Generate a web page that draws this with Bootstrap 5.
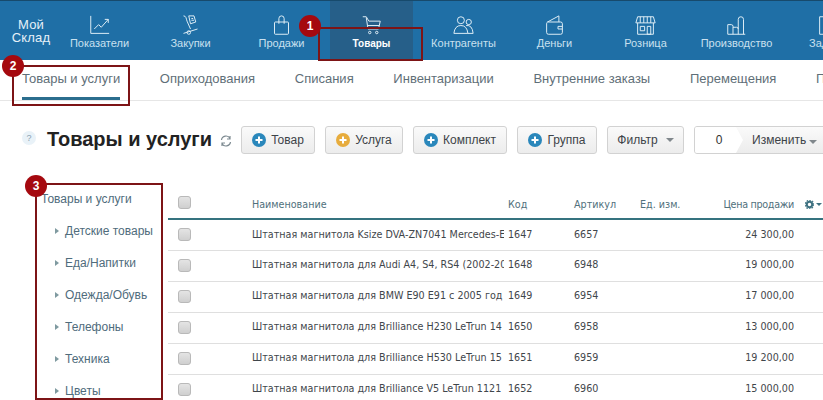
<!DOCTYPE html>
<html lang="ru"><head><meta charset="utf-8"><title>Товары и услуги</title>
<link href="https://cdn.jsdelivr.net/npm/bootstrap@5.3.0/dist/css/bootstrap.min.css" rel="stylesheet">
<style>
html,body{margin:0;height:400px;overflow:hidden;background:#fff}
body{font-family:"Liberation Sans",Arial,sans-serif;width:823px;position:relative}
.topbar{height:60px;background:#1f6fa6;border-top:1px solid #174a6c;padding-left:54px;white-space:nowrap;position:relative}
.brand{position:absolute;left:10px;top:17px;width:42px;text-align:center;color:#e6f1f8;font-size:13px;line-height:13px;font-weight:400;letter-spacing:.2px}
.tb-item{flex:0 0 91px;width:91px;height:59px;text-align:center;color:#c9e0ef;font-size:11px;line-height:13px;padding-top:14px}
.tb-item svg{display:block;margin:0 auto 0;width:21px;height:21px;fill:none;stroke:#e3f0f8;stroke-width:1.1}
.tb-item span{display:block;margin-top:1px}
.tb-item.on{background:#265f89;color:#fff;font-weight:700;font-size:10px;flex:0 0 83px;width:83px;margin:0 5px 0 3px}
.subbar{height:41px;border-bottom:1px solid #e6e6e6;padding-left:22px;gap:39.7px;font-size:13px;color:#5f6f78;white-space:nowrap}
.subbar div{height:40px;padding-top:10px;line-height:17px;flex:0 0 auto}
.subbar .on{position:relative}
.subbar .on::after{content:"";position:absolute;left:0;right:0;top:37px;height:3px;background:#2b6e8e}
.titlerow{height:59px;padding-left:22px;margin-top:25px;white-space:nowrap}
.helpq{flex:0 0 14px;width:14px;height:14px;border-radius:50%;background:#e9f2f8;color:#8aa2b3;font-size:9px;line-height:14px;text-align:center;margin:5px 11px 0 0}
.ttl{flex:0 0 164px;font-size:20px;font-weight:700;color:#222;margin:0;line-height:27px;width:164px}
.reload{flex:0 0 12px;width:12px;height:12px;margin:9px 9px 0 9px;fill:none;stroke:#7d8a91;stroke-width:1.2}
.tbtn{height:28px;border:1px solid #d2d2d2;border-radius:3px;background:linear-gradient(#fafafa,#ececec);color:#3d4348;font-size:12px;padding:0;margin-right:10px;display:flex;align-items:center;justify-content:center;gap:5px;flex:0 0 auto}
.tbtn svg{width:14px;height:14px}
.w1{width:74px}.w2{width:78px}.w3{width:94px}.w4{width:80px}.w5{width:77px}
.caret-d{display:inline-block;border-left:4px solid transparent;border-right:4px solid transparent;border-top:4px solid #80878c;margin-left:3px}
.counter{height:28px;width:180px;flex:0 0 auto;border:1px solid #d2d2d2;border-radius:3px;background:linear-gradient(#fafafa,#ececec);font-size:12px;color:#3d4348;overflow:hidden}
.cnt{width:48px;background:#fff;text-align:center;line-height:26px;color:#333;position:relative;clip-path:polygon(0 0,41px 0,48px 50%,41px 100%,0 100%)}
.chg{padding-left:9px;line-height:26px;font-size:12px}
.chg .caret-d{margin-left:0}
.mainrow{position:relative}
.sidenav{flex:0 0 168px;width:168px;padding:6px 0 0 41px;font-size:12px;color:#4f6c7c;line-height:16px}
.sidenav div{height:32px}
.sidenav .sub{padding-left:24px;position:relative}
.sidenav .sub::before{content:"";position:absolute;left:14px;top:5px;border-left:4px solid #7f9aa0;border-top:3.5px solid transparent;border-bottom:3.5px solid transparent}
.goods{width:655px;table-layout:fixed;border-collapse:collapse;font-family:"DejaVu Sans",Verdana,sans-serif;font-size:9.6px;color:#3f464b;margin:0}
.goods th{font-weight:400;color:#50707c;height:34px;border-bottom:2px solid #35737f;padding:8px 0 0;vertical-align:middle;font-size:9.6px}
.goods td{height:31px;border-bottom:1px solid #dfdfdf;padding:0;white-space:nowrap;overflow:hidden;vertical-align:middle}
.clipname{width:252px;overflow:hidden;white-space:nowrap}
.goods .pr{text-align:right;padding-right:0}
.goods th.pr{letter-spacing:-.3px}
.goods th.chkh{padding:2px 0 0}
.goods th.gearh{padding:7px 0 0}
.fake-chk{display:block;margin-left:10px;width:13px;height:13px;border:1px solid #b9b9b9;border-radius:3px;background:linear-gradient(#e4e4e4,#cfcfcf)}
.gear{width:9px;height:9px;margin-left:11px;vertical-align:-1px}
.caret-s{display:inline-block;border-left:3px solid transparent;border-right:3px solid transparent;border-top:3px solid #3f7281;margin-left:2px;vertical-align:2px}
.redbox{position:absolute;border:2px solid #7d1416;pointer-events:none}
.num{position:absolute;width:22px;height:22px;border-radius:50%;background:#a5090f;color:#fff;font-size:12px;font-weight:700;text-align:center;line-height:22px}
</style></head>
<body>
<div class="topbar d-flex">
  <div class="brand">Мой<br>Склад</div>
  <div class="tb-item"><svg viewBox="0 0 24 24"><path d="M2 1v20h21M6 16l5-5 3 3 8-9M18 5h4v4"/></svg><span>Показатели</span></div>
  <div class="tb-item"><svg viewBox="0 0 24 24"><path d="M4 1c3 0 3 3 4 6l4 9M10 1h6l2 7-6 2zM13 4h2M13 6h3M4 21l16-5"/><circle cx="10" cy="20" r="2"/></svg><span>Закупки</span></div>
  <div class="tb-item"><svg viewBox="0 0 24 24"><path d="M5 8h14a1 1 0 0 1 1 1v12a1 1 0 0 1-1 1H5a1 1 0 0 1-1-1V9a1 1 0 0 1 1-1zM9 10V4q0-3 3-3t3 3v6"/></svg><span>Продажи</span></div>
  <div class="tb-item on"><svg viewBox="0 0 24 24"><path d="M2 2h4l3 5h13l-2 9H8L6 3"/><circle cx="10" cy="20" r="1.4"/><circle cx="18" cy="20" r="1.4"/><path d="M8 12h13"/></svg><span>Товары</span></div>
  <div class="tb-item"><svg viewBox="0 0 24 24"><circle cx="9" cy="6" r="4"/><circle cx="18" cy="8" r="3"/><path d="M1 21q1-9 8-9t8 9zM15 12q7-1 8 9h-6"/></svg><span>Контрагенты</span></div>
  <div class="tb-item"><svg viewBox="0 0 24 24"><path d="M4 8l13-7v7M4 8h15a2 2 0 0 1 2 2v10a2 2 0 0 1-2 2H5a2 2 0 0 1-2-2V10a2 2 0 0 1 1-2zM21 13h-5v3h5"/></svg><span>Деньги</span></div>
  <div class="tb-item"><svg viewBox="0 0 24 24"><path d="M3 2h18l2 7H1zM3 9v13h18V9M6 2v7M10 2v7M14 2v7M18 2v7M6 13h5v5H6zM14 13h4v9h-4z"/></svg><span>Розница</span></div>
  <div class="tb-item"><svg viewBox="0 0 24 24"><path d="M2 22V11h4q2 0 2 2v9M2 22h20M8 14h4q2 0 2 2v6M14 16V5q0-3 3-3t3 3v17"/></svg><span>Производство</span></div>
  <div class="tb-item"><svg viewBox="0 0 24 24"><path d="M3 2h18v20H3z"/></svg><span>Задачи</span></div>
</div>
<div class="subbar d-flex">
  <div class="on">Товары и услуги</div><div>Оприходования</div><div>Списания</div><div>Инвентаризации</div><div>Внутренние заказы</div><div>Перемещения</div><div>Поиск</div>
</div>
<div class="titlerow d-flex align-items-start">
  <div class="helpq">?</div>
  <h1 class="ttl">Товары и услуги</h1>
  <svg class="reload" viewBox="0 0 12 12"><path d="M1.500 5A4.500 4.500 0 0 1 10 3.500M10.500 7A4.500 4.500 0 0 1 2 8.500M10 1v3H7M2 11V8h3"/></svg>
  <button class="tbtn w1" type="button"><svg viewBox="0 0 14 14"><circle cx="7" cy="7" r="7" fill="#2a87bb"/><path d="M7 3.500v7M3.500 7h7" stroke="#fff" stroke-width="2"/></svg>Товар</button>
  <button class="tbtn w2" type="button"><svg viewBox="0 0 14 14"><circle cx="7" cy="7" r="7" fill="#e7ac3d"/><path d="M7 3.500v7M3.500 7h7" stroke="#fff" stroke-width="2"/></svg>Услуга</button>
  <button class="tbtn w3" type="button"><svg viewBox="0 0 14 14"><circle cx="7" cy="7" r="7" fill="#2a87bb"/><path d="M7 3.500v7M3.500 7h7" stroke="#fff" stroke-width="2"/></svg>Комплект</button>
  <button class="tbtn w4" type="button"><svg viewBox="0 0 14 14"><circle cx="7" cy="7" r="7" fill="#2a87bb"/><path d="M7 3.500v7M3.500 7h7" stroke="#fff" stroke-width="2"/></svg>Группа</button>
  <button class="tbtn w5" type="button">Фильтр <i class="caret-d"></i></button>
  <div class="counter d-flex"><div class="cnt">0</div><div class="chg">Изменить <i class="caret-d"></i></div></div>
</div>
<div class="mainrow d-flex align-items-start">
  <div class="sidenav">
    <div>Товары и услуги</div>
    <div class="sub">Детские товары</div>
    <div class="sub">Еда/Напитки</div>
    <div class="sub">Одежда/Обувь</div>
    <div class="sub">Телефоны</div>
    <div class="sub">Техника</div>
    <div class="sub">Цветы</div>
  </div>
  <table class="goods">
    <colgroup><col style="width:84px"><col style="width:256px"><col style="width:66px"><col style="width:66px"><col style="width:60px"><col style="width:94px"><col></colgroup>
    <thead><tr><th class="chkh"><i class="fake-chk"></i></th><th>Наименование</th><th>Код</th><th>Артикул</th><th>Ед. изм.</th><th class="pr">Цена продажи</th><th class="gearh"><svg class="gear" viewBox="0 0 10 10"><circle cx="5" cy="5" r="3" fill="none" stroke="#3f7281" stroke-width="2.200"/><circle cx="5" cy="5" r="4.800" fill="none" stroke="#3f7281" stroke-width="1.200" stroke-dasharray="1.800 1.300"/></svg><i class="caret-s"></i></th></tr></thead>
    <tbody>
      <tr><td><i class="fake-chk"></i></td><td><div class="clipname">Штатная магнитола Ksize DVA-ZN7041 Mercedes-E</div></td><td>1647</td><td>6657</td><td></td><td class="pr">24 300,00</td><td></td></tr>
      <tr><td><i class="fake-chk"></i></td><td><div class="clipname">Штатная магнитола для Audi A4, S4, RS4 (2002-2008)</div></td><td>1648</td><td>6948</td><td></td><td class="pr">19 000,00</td><td></td></tr>
      <tr><td><i class="fake-chk"></i></td><td><div class="clipname">Штатная магнитола для BMW E90 E91 с 2005 год</div></td><td>1649</td><td>6954</td><td></td><td class="pr">17 000,00</td><td></td></tr>
      <tr><td><i class="fake-chk"></i></td><td><div class="clipname">Штатная магнитола для Brilliance H230 LeTrun 14</div></td><td>1650</td><td>6958</td><td></td><td class="pr">13 000,00</td><td></td></tr>
      <tr><td><i class="fake-chk"></i></td><td><div class="clipname">Штатная магнитола для Brilliance H530 LeTrun 15</div></td><td>1651</td><td>6959</td><td></td><td class="pr">19 200,00</td><td></td></tr>
      <tr><td><i class="fake-chk"></i></td><td><div class="clipname">Штатная магнитола для Brilliance V5 LeTrun 1121</div></td><td>1652</td><td>6960</td><td></td><td class="pr">15 000,00</td><td></td></tr>
    </tbody>
  </table>
</div>
<div class="redbox" style="left:318px;top:27px;width:105px;height:34px"></div>
<div class="num" style="left:299px;top:15px">1</div>
<div class="redbox" style="left:12px;top:65px;width:118px;height:41px"></div>
<div class="num" style="left:2px;top:55px">2</div>
<div class="redbox" style="left:35px;top:183px;width:128px;height:217px"></div>
<div class="num" style="left:25px;top:175px">3</div>
</body></html>
